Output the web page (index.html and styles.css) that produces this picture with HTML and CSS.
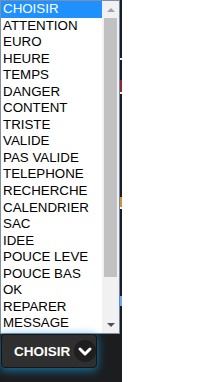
FILE: index.html
```html
<!DOCTYPE html>
<html>
<head>
<meta charset="utf-8">
<link rel="stylesheet" href="styles.css">
</head>
<body>
<div class="panel">
  <div class="top">
    <div class="listbox">
      <div class="options">
        <div class="opt selected">CHOISIR</div>
        <div class="opt">ATTENTION</div>
        <div class="opt">EURO</div>
        <div class="opt">HEURE</div>
        <div class="opt">TEMPS</div>
        <div class="opt">DANGER</div>
        <div class="opt">CONTENT</div>
        <div class="opt">TRISTE</div>
        <div class="opt">VALIDE</div>
        <div class="opt">PAS VALIDE</div>
        <div class="opt">TELEPHONE</div>
        <div class="opt">RECHERCHE</div>
        <div class="opt">CALENDRIER</div>
        <div class="opt">SAC</div>
        <div class="opt">IDEE</div>
        <div class="opt">POUCE LEVE</div>
        <div class="opt">POUCE BAS</div>
        <div class="opt">OK</div>
        <div class="opt">REPARER</div>
        <div class="opt">MESSAGE</div>
      </div>
      <div class="scrollbar">
        <div class="arrow up"></div>
        <div class="track"><div class="thumb"></div></div>
        <div class="arrow down"></div>
      </div>
    </div>
    <div class="edge">
      <div class="seg s1"></div>
      <div class="seg white"></div>
      <div class="seg s2"></div>
      <div class="seg red"></div>
      <div class="seg white"></div>
      <div class="seg s3"></div>
      <div class="seg gold"></div>
      <div class="seg white"></div>
      <div class="seg s4"></div>
      <div class="seg blue"></div>
      <div class="seg rest"></div>
    </div>
  </div>
  <div class="footer">
    <button class="choose">CHOISIR
      <span class="chev"><svg width="22" height="22" viewBox="0 0 22 22"><path d="M6 9 L11 14 L16 9" fill="none" stroke="#fff" stroke-width="3" stroke-linecap="round" stroke-linejoin="round"/></svg></span>
    </button>
  </div>
</div>
</body>
</html>
```
FILE: styles.css
```css
html, body {
  margin: 0;
  padding: 0;
  background: #ffffff;
}
.panel {
  width: 122px;
  height: 382px;
  background: #1c1d1f;
  display: flex;
  flex-direction: column;
}
.top {
  display: flex;
}
.listbox {
  width: 118px;
  height: 332px;
  border: 1px solid #7d8ea8;
  border-right-color: #6f86b3;
  background: #ffffff;
  display: flex;
}
.edge {
  width: 2px;
  display: flex;
  flex-direction: column;
}
.seg { background: #1c1d1f; }
.seg.s1 { height: 58px; }
.seg.s2 { height: 20px; }
.seg.s3 { height: 103px; }
.seg.s4 { height: 87px; }
.seg.rest { flex: 1; }
.seg.white { background: #f4f4f4; height: 2px; }
.seg.red { background: #8a2a2a; height: 12px; }
.seg.gold { background: #c8962a; height: 10px; }
.seg.blue { background: #6fa8e8; height: 10px; }
.options {
  flex: 1;
  display: flex;
  flex-direction: column;
}
.opt {
  height: 16.55px;
  line-height: 16.55px;
  padding-left: 2px;
  font-family: "Liberation Sans", Arial, sans-serif;
  font-size: 13.33px;
  color: #000;
  white-space: nowrap;
}
.opt.selected {
  background: #1e90ff;
  color: #fff;
}
.scrollbar {
  width: 17px;
  background: #f1f1f1;
  display: flex;
  flex-direction: column;
}
.arrow {
  height: 17px;
  display: flex;
  align-items: center;
  justify-content: center;
}
.arrow.up::before {
  content: "";
  border-left: 4px solid transparent;
  border-right: 4px solid transparent;
  border-bottom: 4px solid #a3a3a3;
}
.arrow.down::before {
  content: "";
  border-left: 4px solid transparent;
  border-right: 4px solid transparent;
  border-top: 4px solid #505050;
}
.track {
  flex: 1;
  padding: 0 2px;
}
.thumb {
  height: 259px;
  background: #c1c1c1;
}
.footer {
  flex: 1;
  padding: 0 0 0 1px;
}
.choose {
  width: 96px;
  height: 34px;
  margin: 0;
  padding: 0 0 0 12px;
  display: flex;
  align-items: center;
  gap: 4px;
  background: #2f2f30;
  border: 1px solid #151515;
  border-radius: 4px;
  box-shadow: 0 2px 9px 1px rgba(20, 140, 200, 0.7);
  color: #fff;
  font-family: "Liberation Sans", Arial, sans-serif;
  font-weight: bold;
  font-size: 13.5px;
}
.chev {
  width: 22px;
  height: 22px;
  border-radius: 50%;
  background: #1e1e1f;
  display: flex;
}
```
